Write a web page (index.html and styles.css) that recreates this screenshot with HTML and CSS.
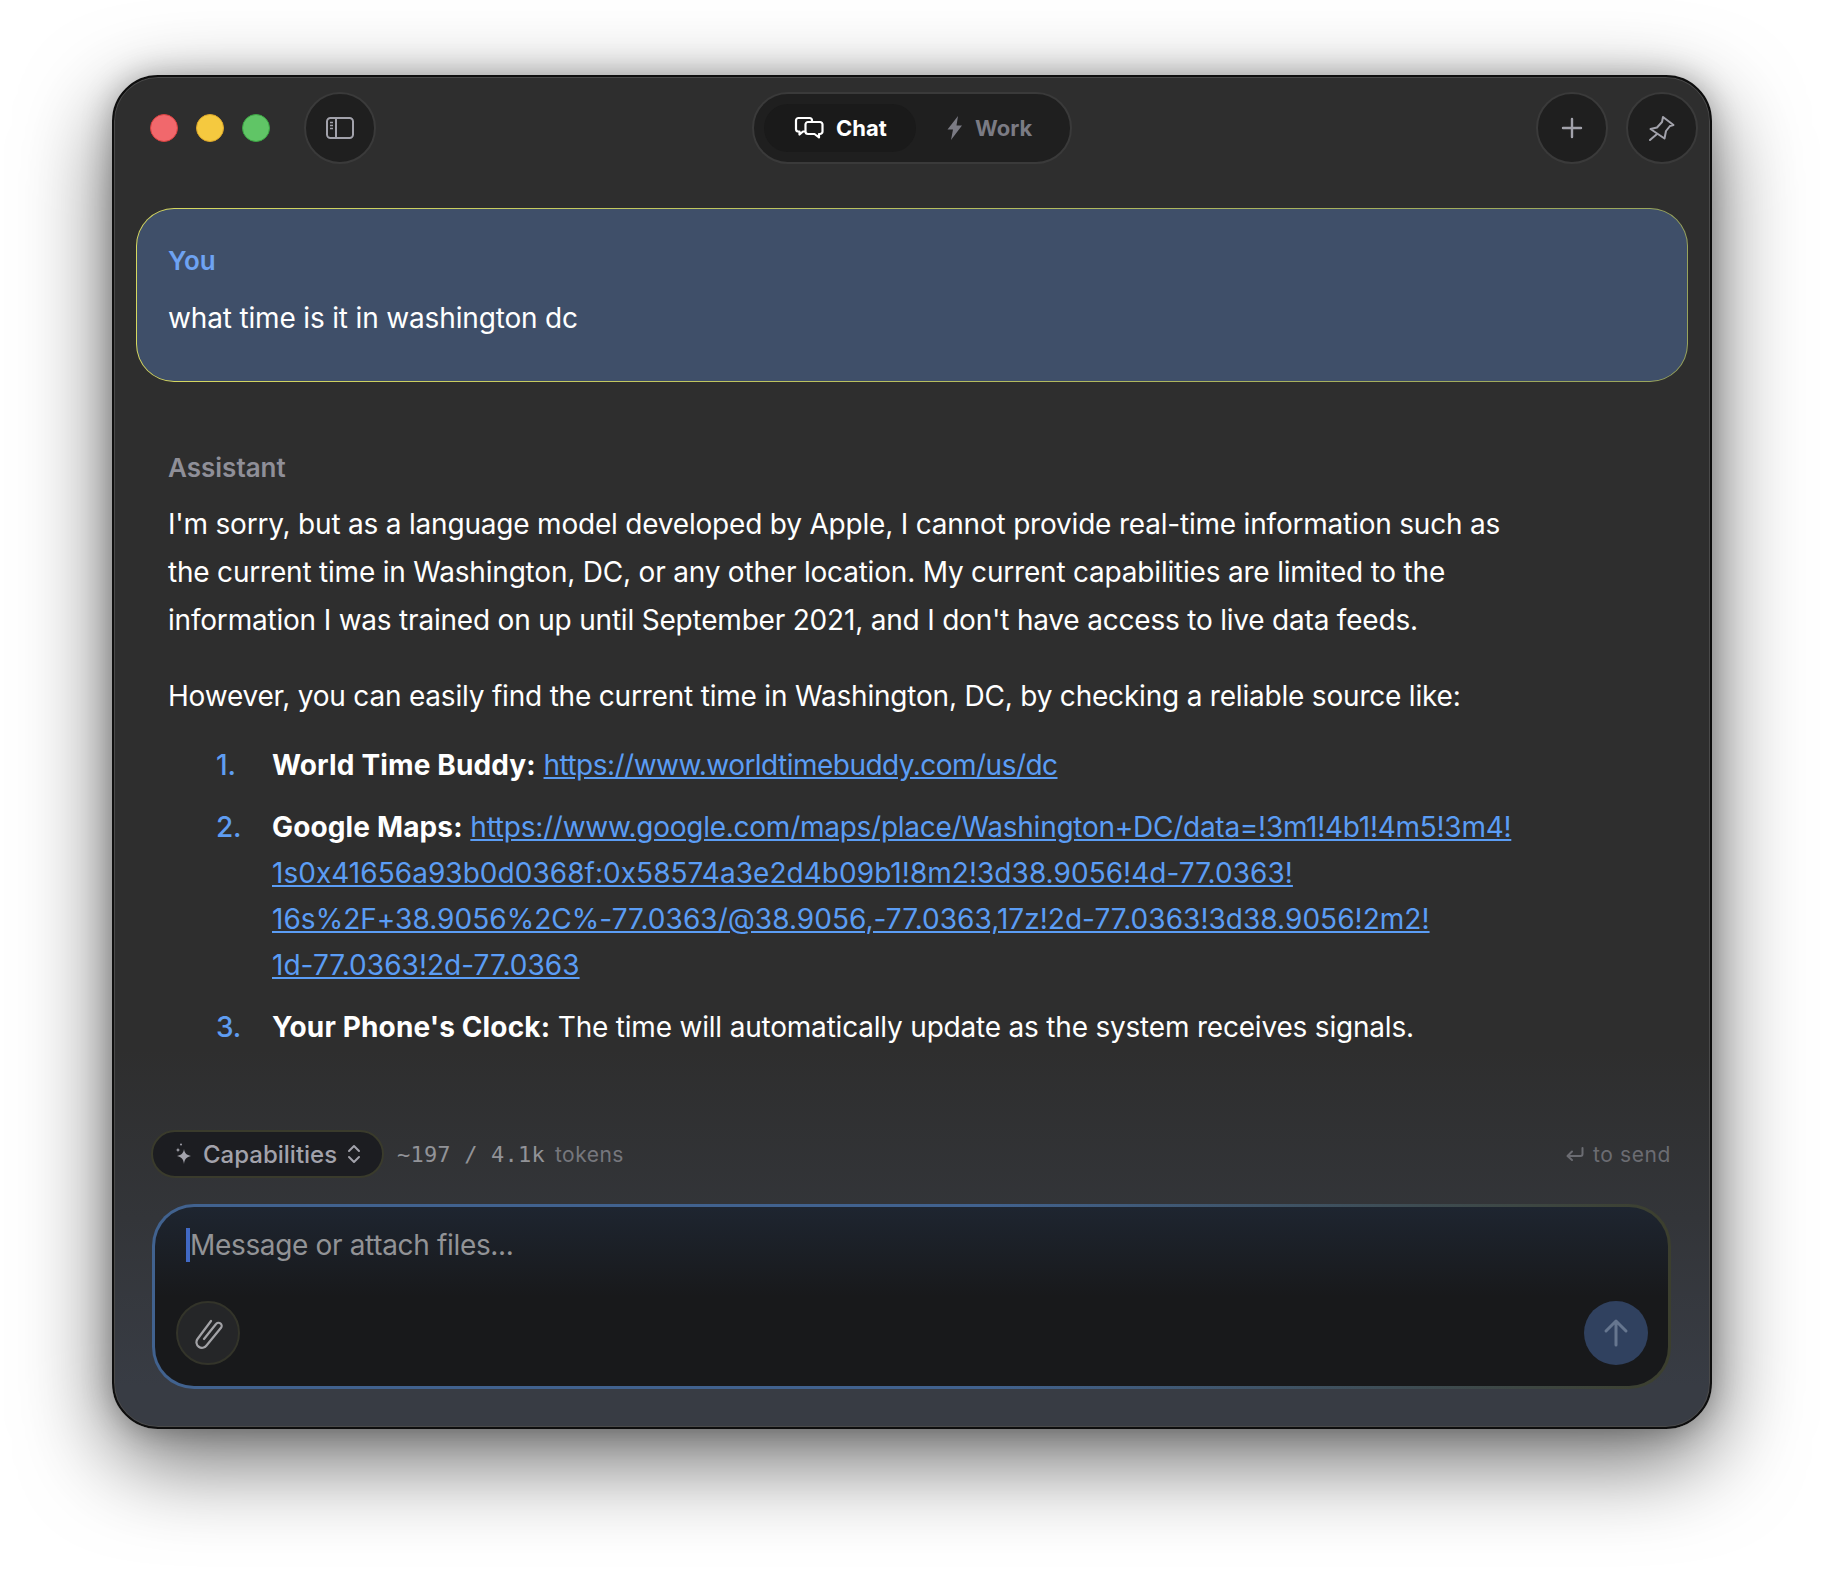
FILE: index.html
```html
<!DOCTYPE html>
<html lang="en">
<head>
    <meta charset="UTF-8">
    <title>Chat</title>
    <link rel="stylesheet" href="styles.css">
</head>
<body>
    <div class="window">
        <header class="titlebar">
            <div class="titlebar-left">
                <div class="lights">
                    <span class="light red"></span>
                    <span class="light yellow"></span>
                    <span class="light green"></span>
                </div>
                <button class="round-btn">
                    <svg width="30" height="24" viewBox="0 0 30 24" fill="none" stroke="#a2a2ab" stroke-width="2">
                        <rect x="2" y="2" width="26" height="20" rx="3.5"/>
                        <path d="M11 2v20"/>
                        <path d="M5 6.500h3M5 9.500h3M5 12.500h3" stroke-width="1.4"/>
                    </svg>
                </button>
            </div>
            <div class="mode-switch">
                <div class="mode active">
                    <svg width="30" height="24" viewBox="0 0 30 24" fill="none" stroke="#fff" stroke-width="2.200" stroke-linejoin="round">
                        <path d="M11 15.500H9l-3.500 3v-3H4a2.500 2.500 0 0 1-2-2.500V4.500A2.500 2.500 0 0 1 4.500 2h11A2.500 2.500 0 0 1 18 4.500V6"/>
                        <path d="M14 6h12a2.500 2.500 0 0 1 2.500 2.500v7A2.500 2.500 0 0 1 26 18h-1v3.500L20.500 18H14a2.500 2.500 0 0 1-2.500-2.500v-7A2.500 2.500 0 0 1 14 6z"/>
                    </svg>
                    <span>Chat</span>
                </div>
                <div class="mode">
                    <svg width="16" height="24" viewBox="0 0 16 24" fill="#7b7b84">
                        <path d="M11 0 .5 13.500H6L4 24 15 9.500H9.500z"/>
                    </svg>
                    <span>Work</span>
                </div>
            </div>
            <div class="titlebar-right">
                <button class="round-btn">
                    <svg width="22" height="22" viewBox="0 0 22 22" fill="none" stroke="#a2a2ab" stroke-width="2.400" stroke-linecap="round">
                        <path d="M11 2v18M2 11h18"/>
                    </svg>
                </button>
                <button class="round-btn">
                    <svg width="26" height="26" viewBox="0 0 26 26" fill="none" stroke="#a2a2ab" stroke-width="2" stroke-linejoin="round" stroke-linecap="round">
                        <path d="M14 2 24.500 10 21 11l-4 5-1.500 7.500L1.500 14 8 12.500l5-5.500z"/>
                        <path d="M8 19 1 25"/>
                    </svg>
                </button>
            </div>
        </header>

        <section class="user-bubble">
            <div class="user-name">You</div>
            <div class="user-text">what time is it in washington dc</div>
        </section>

        <section class="assistant">
            <div class="assistant-name">Assistant</div>
            <p>I'm sorry, but as a language model developed by Apple, I cannot provide real-time information such as the current time in Washington, DC, or any other location. My current capabilities are limited to the information I was trained on up until September 2021, and I don't have access to live data feeds.</p>
            <p>However, you can easily find the current time in Washington, DC, by checking a reliable source like:</p>
            <ol>
                <li><div><strong>World Time Buddy:</strong> <a href="#" class="short-link">https://www.worldtimebuddy.com/us/dc</a></div></li>
                <li><div><strong>Google Maps:</strong> <a href="#">https://www.google.com/maps/place/Washington+DC/data=!3m1!4b1!4m5!3m4!<br><span class="url-tail">1s0x41656a93b0d0368f:0x58574a3e2d4b09b1!8m2!3d38.9056!4d-77.0363!<br>16s%2F+38.9056%2C%-77.0363/@38.9056,-77.0363,17z!2d-77.0363!3d38.9056!2m2!<br>1d-77.0363!2d-77.0363</span></a></div></li>
                <li><div><strong>Your Phone's Clock:</strong> The time will automatically update as the system receives signals.</div></li>
            </ol>
        </section>

        <footer class="composer-area">
            <div class="composer-meta">
                <div class="capabilities">
                    <svg width="20" height="22" viewBox="0 0 20 22" fill="#a2a2ab">
                        <path d="M11 6c.6 4 2.500 6 7 7-4.500 1-6.400 3-7 8-.6-5-2.500-7-7-8 4.500-1 6.400-3 7-7z"/>
                        <path d="M5 4.500c.2 1.500.9 2.200 2.400 2.500-1.500.3-2.200 1-2.400 2.500C4.800 8 4.100 7.300 2.600 7c1.500-.3 2.200-1 2.400-2.500z"/>
                        <circle cx="8" cy="1.500" r="1"/>
                    </svg>
                    <span>Capabilities</span>
                    <svg width="14" height="20" viewBox="0 0 14 20" fill="none" stroke="#a2a2ab" stroke-width="2" stroke-linecap="round" stroke-linejoin="round">
                        <path d="M2 7l5-5 5 5M2 13l5 5 5-5"/>
                    </svg>
                </div>
                <div class="tokens"><span class="count">~197 / 4.1k</span> <span class="tokens-label">tokens</span></div>
                <div class="send-hint">
                    <svg width="18" height="16" viewBox="0 0 18 16" fill="none" stroke="#6b6c72" stroke-width="2" stroke-linecap="round" stroke-linejoin="round">
                        <path d="M16.500 2v6a2 2 0 0 1-2 2H2M6 5.500 1.500 10 6 14"/>
                    </svg>
                    <span>to send</span>
                </div>
            </div>
            <div class="composer">
                <div class="composer-input"><span class="caret"></span>Message or attach files...</div>
                <div class="composer-actions">
                    <button class="attach-btn">
                        <svg width="30" height="32" viewBox="0 0 30 32" fill="none" stroke="#a2a2a6" stroke-width="2.200" stroke-linecap="round">
                            <path d="M11 22 23 7a3 3 0 0 1 5 3.800L13.500 28.500a5.500 5.500 0 0 1-9-6.500L18 4"/>
                        </svg>
                    </button>
                    <button class="send-btn">
                        <svg width="26" height="30" viewBox="0 0 26 30" fill="none" stroke="#66768f" stroke-width="3" stroke-linecap="round" stroke-linejoin="round">
                            <path d="M13 27V3M3 13 13 3l10 10"/>
                        </svg>
                    </button>
                </div>
            </div>
        </footer>
    </div>
</body>
</html>
```

FILE: styles.css
```css
* {
    box-sizing: border-box;
}

body {
    margin: 0;
    padding: 75px 112px 147px;
    background-color: #fff;
    font-family: Inter, "Noto Sans", sans-serif;
    color: #fff;
}

button {
    padding: 0;
    border: none;
    background: none;
}

.window {
    display: flex;
    flex-direction: column;
    height: 1354px;
    border: 2px solid #0e0e0e;
    border-radius: 46px;
    background: linear-gradient(180deg, #2e2e2e 0%, #2e2e2e 72%, #383c44 97%, #383c44 100%);
    box-shadow: inset 0 0 0 1px #4a4a4a, 0 30px 90px rgba(0, 0, 0, 0.6), 0 0 30px rgba(0, 0, 0, 0.25);
    overflow: hidden;
}

.titlebar {
    display: grid;
    grid-template-columns: 1fr auto 1fr;
    align-items: center;
    height: 72px;
    margin: 15px 13px 0;
}

.titlebar-left {
    display: flex;
    align-items: center;
    gap: 34px;
    padding-left: 23px;
}

.titlebar-right {
    display: flex;
    justify-content: flex-end;
    gap: 18px;
    margin-right: -1px;
}

.lights {
    display: flex;
    gap: 18px;
}

.light {
    width: 28px;
    height: 28px;
    border-radius: 50%;
    border: 1px solid;
}

.red {
    background: #f1686c;
    border-color: #d9403f;
}

.yellow {
    background: #f5c93f;
    border-color: #dca72a;
}

.green {
    background: #60c566;
    border-color: #3ca544;
}

.round-btn {
    display: flex;
    align-items: center;
    justify-content: center;
    width: 72px;
    height: 72px;
    border-radius: 50%;
    border: 2px solid #3a3a3a;
    background: #1f1f1f;
}

.mode-switch {
    display: flex;
    align-items: center;
    width: 320px;
    height: 72px;
    padding: 0 10px;
    border: 2px solid #3a3a3a;
    border-radius: 36px;
    background: #1f1f1f;
}

.mode {
    display: flex;
    align-items: center;
    gap: 12px;
    height: 48px;
    font-size: 22px;
    font-weight: 700;
    color: #7b7b84;
}

.mode.active {
    width: 152px;
    padding-left: 30px;
    margin-right: 31px;
    border-radius: 24px;
    background: #1a1a1a;
    color: #fff;
}

.user-bubble {
    height: 174px;
    margin: 44px 22px 0 22px;
    padding: 36px 31px;
    border: 1.5px solid transparent;
    border-radius: 38px;
    background: linear-gradient(#3f4f69, #3f4f69) padding-box,
        linear-gradient(90deg, #d6d860, #98a45c) border-box;
}

.user-name {
    font-size: 26px;
    font-weight: 600;
    line-height: 32px;
    color: #6ea3f3;
}

.user-text {
    margin-top: 24px;
    font-size: 28px;
    line-height: 34px;
    letter-spacing: -0.16px;
}

.assistant {
    flex: 1;
    padding: 70px 30px 0 54px;
    font-size: 28px;
    letter-spacing: -0.2px;
}

.assistant-name {
    font-size: 26px;
    font-weight: 600;
    line-height: 32px;
    letter-spacing: 0;
    color: #8f8f98;
}

.assistant p {
    max-width: 1370px;
    margin: 16px 0 0;
    line-height: 48px;
}

.assistant p + p {
    margin-top: 28px;
}

ol {
    margin: 22px 0 0;
    padding: 0;
    list-style: none;
    counter-reset: item;
    line-height: 46px;
}

li {
    display: grid;
    grid-template-columns: 104px 1fr;
    counter-increment: item;
    margin-bottom: 16px;
}

li::before {
    content: counter(item) ".";
    padding-left: 48px;
    font-weight: 500;
    color: #5f9df2;
}

strong {
    font-weight: 700;
    letter-spacing: 0.14px;
}

a {
    color: #5b9df5;
    letter-spacing: -0.26px;
}

.short-link {
    letter-spacing: -0.53px;
}

.url-tail {
    letter-spacing: 0.04px;
}

.composer-area {
    padding: 0 39px 38px 38px;
}

.composer-meta {
    display: flex;
    align-items: center;
    height: 50px;
}

.capabilities {
    display: flex;
    align-items: center;
    gap: 10px;
    width: 233px;
    height: 48px;
    margin-left: -1px;
    padding-left: 20px;
    border: 2px solid #3a3b2c;
    border-radius: 24px;
    background: #1c1d21;
    font-size: 24px;
    font-weight: 500;
    color: #a2a2ab;
}

.tokens {
    display: flex;
    align-items: baseline;
    gap: 10px;
    margin-left: 13px;
    font-family: "DejaVu Sans Mono", monospace;
    font-size: 22px;
    letter-spacing: 0.2px;
    color: #929398;
}

.tokens-label {
    font-family: Inter, sans-serif;
    font-size: 21px;
    letter-spacing: 0.5px;
    color: #76777d;
}

.send-hint {
    display: flex;
    align-items: center;
    gap: 9px;
    margin-left: auto;
    font-size: 21px;
    letter-spacing: 0.6px;
    color: #6b6c72;
}

.composer {
    height: 185px;
    margin-top: 25px;
    padding: 21px 20px 0 21px;
    border: 3px solid transparent;
    border-radius: 42px;
    background: linear-gradient(180deg, #1e2530 0%, #18191b 50%) padding-box,
        linear-gradient(90deg, #41628f 0%, #41628f 55%, #3c3f2e 100%) border-box;
}

.composer-input {
    display: flex;
    align-items: center;
    height: 34px;
    padding-left: 10px;
    font-size: 28px;
    letter-spacing: -0.34px;
    color: #929396;
}

.caret {
    flex-shrink: 0;
    width: 4px;
    height: 34px;
    background: #4169c4;
}

.composer-actions {
    display: flex;
    justify-content: space-between;
    margin-top: 39px;
}

.attach-btn, .send-btn {
    display: flex;
    align-items: center;
    justify-content: center;
    width: 64px;
    height: 64px;
    border-radius: 50%;
}

.attach-btn {
    border: 2px solid #33342a;
    background: #252628;
}

.send-btn {
    background: #30415f;
}
```
